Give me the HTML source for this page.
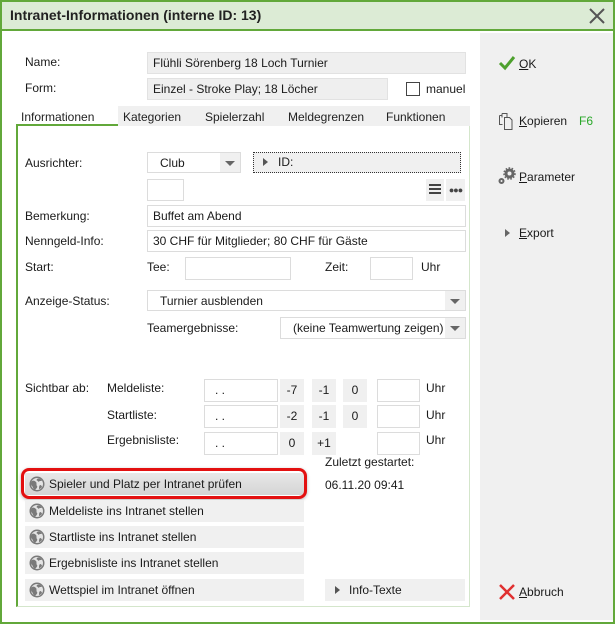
<!DOCTYPE html>
<html><head><meta charset="utf-8"><style>
*{box-sizing:border-box;margin:0;padding:0}
body{width:615px;height:624px;overflow:hidden;background:#fff;font-family:"Liberation Sans",sans-serif;font-size:12px;color:#1a1a1a;position:relative}
.a{position:absolute;white-space:nowrap}
.f{position:absolute;border:1px solid #dcdcdc;background:#fff;padding:0 5px;line-height:20px}
.g{position:absolute;background:#f0f0f0;text-align:center;line-height:22px}
.btn{position:absolute;left:25px;width:279px;height:22px;background:#f0f0f0;line-height:22px;padding-left:24px}
.glb{position:absolute;left:4px;top:3px}
.tab{position:absolute;top:106px;height:20px;line-height:22px;padding-left:5px;background:#f0f0f0;color:#222}
.dd{position:absolute;right:0;top:0;width:20px;height:100%;background:#f0f0f0}
.dd:after{content:"";position:absolute;left:5px;top:8px;border-left:5px solid transparent;border-right:5px solid transparent;border-top:5px solid #666}
u{text-decoration:underline}
</style></head><body>
<svg width="0" height="0" style="position:absolute"><defs><symbol id="gl" viewBox="0 0 16 16"><circle cx="8" cy="8" r="7.5" fill="#7a7a7a"/><circle cx="8" cy="8" r="6" fill="#e4e4e4"/><path d="M3 5c2-1 3 0 4 1s0 3 1 4-1 3-2 4c-2-1-2-3-3-4s-2-3 0-5zM9 2.5c2 0 3 1 4 2-1 1-2 0-3 1s-1-1-2-1 0-2 1-2zM11 9c1 0 2 1 2 2-1 1-2 2-3 2 0-2 0-3 1-4z" fill="#7a7a7a"/></symbol></defs></svg>
<div class="a" style="left:0;top:0;width:615px;height:624px;border:2px solid #62a83a"></div>
<div class="a" style="left:2px;top:2px;width:611px;height:29px;background:#dcebd5;border-bottom:2px solid #62a83a"></div>
<div class="a" style="left:10px;top:7px;font-size:14px;font-weight:bold;color:#222">Intranet-Informationen (interne ID: 13)</div>
<svg class="a" style="left:588px;top:7px" width="18" height="18"><path d="M2 2L16 16M16 2L2 16" stroke="#555" stroke-width="2"/></svg>
<div class="a" style="left:480px;top:33px;width:133px;height:587px;background:#f0f0f0"></div>

<div class="a" style="left:25px;top:55px">Name:</div>
<div class="f" style="left:147px;top:52px;width:319px;height:22px;background:#efefef;border-color:#e2e2e2">Flühli Sörenberg 18 Loch Turnier</div>
<div class="a" style="left:25px;top:81px">Form:</div>
<div class="f" style="left:147px;top:78px;width:241px;height:22px;background:#efefef;border-color:#e2e2e2">Einzel - Stroke Play; 18 Löcher</div>
<div class="a" style="left:406px;top:82px;width:14px;height:14px;border:1px solid #444;background:#fff"></div>
<div class="a" style="left:426px;top:82px">manuel</div>

<div class="tab" style="left:16px;width:102px;background:#fff;border-bottom:2px solid #62a83a">Informationen</div>
<div class="tab" style="left:118px;width:82px">Kategorien</div>
<div class="tab" style="left:200px;width:83px">Spielerzahl</div>
<div class="tab" style="left:283px;width:98px">Meldegrenzen</div>
<div class="tab" style="left:381px;width:89px">Funktionen</div>
<div class="a" style="left:16px;top:126px;width:454px;height:481px;border:1px solid #d4e6cb;border-top:none;border-left:2px solid #62a83a"></div>

<div class="a" style="left:25px;top:156px">Ausrichter:</div>
<div class="f" style="left:147px;top:152px;width:94px;height:21px;padding-left:12px">Club<div class="dd"></div></div>
<div class="a" style="left:253px;top:152px;width:208px;height:21px;background:#f0f0f0;border:1px dotted #333;line-height:19px;padding-left:24px">ID:</div>
<div class="a" style="left:263px;top:158px;border-top:4px solid transparent;border-bottom:4px solid transparent;border-left:5px solid #555"></div>
<div class="f" style="left:147px;top:179px;width:37px;height:22px"></div>
<div class="g" style="left:426px;top:179px;width:18px;height:22px"></div>
<div class="a" style="left:429px;top:184px;width:12px;height:2px;background:#444;box-shadow:0 4px #444,0 8px #444"></div>
<div class="g" style="left:446px;top:179px;width:19px;height:22px;font-size:9px;font-weight:bold;color:#444;letter-spacing:-1px">●●●</div>
<div class="a" style="left:25px;top:209px">Bemerkung:</div>
<div class="f" style="left:147px;top:205px;width:319px;height:22px">Buffet am Abend</div>
<div class="a" style="left:25px;top:234px">Nenngeld-Info:</div>
<div class="f" style="left:147px;top:230px;width:319px;height:22px">30 CHF für Mitglieder; 80 CHF für Gäste</div>
<div class="a" style="left:25px;top:260px">Start:</div>
<div class="a" style="left:147px;top:260px">Tee:</div>
<div class="f" style="left:185px;top:257px;width:106px;height:23px"></div>
<div class="a" style="left:325px;top:260px">Zeit:</div>
<div class="f" style="left:370px;top:257px;width:43px;height:23px"></div>
<div class="a" style="left:421px;top:260px">Uhr</div>
<div class="a" style="left:25px;top:294px">Anzeige-Status:</div>
<div class="f" style="left:147px;top:290px;width:319px;height:21px;padding-left:12px">Turnier ausblenden<div class="dd"></div></div>
<div class="a" style="left:147px;top:321px">Teamergebnisse:</div>
<div class="f" style="left:280px;top:317px;width:186px;height:22px;padding-left:12px">(keine Teamwertung zeigen)<div class="dd"></div></div>

<div class="a" style="left:25px;top:381px">Sichtbar ab:</div>
<div class="a" style="left:107px;top:381px">Meldeliste:</div>
<div class="a" style="left:107px;top:408px">Startliste:</div>
<div class="a" style="left:107px;top:433px">Ergebnisliste:</div>
<div class="f" style="left:204px;top:379px;width:74px;height:23px;padding-left:10px">. .</div>
<div class="f" style="left:204px;top:405px;width:74px;height:23px;padding-left:10px">. .</div>
<div class="f" style="left:204px;top:432px;width:74px;height:23px;padding-left:10px">. .</div>
<div class="g" style="left:280px;top:379px;width:24px;height:23px">-7</div>
<div class="g" style="left:312px;top:379px;width:24px;height:23px">-1</div>
<div class="g" style="left:343px;top:379px;width:24px;height:23px">0</div>
<div class="g" style="left:280px;top:405px;width:24px;height:23px">-2</div>
<div class="g" style="left:312px;top:405px;width:24px;height:23px">-1</div>
<div class="g" style="left:343px;top:405px;width:24px;height:23px">0</div>
<div class="g" style="left:280px;top:432px;width:24px;height:23px">0</div>
<div class="g" style="left:312px;top:432px;width:24px;height:23px">+1</div>
<div class="f" style="left:377px;top:379px;width:43px;height:23px"></div>
<div class="f" style="left:377px;top:405px;width:43px;height:23px"></div>
<div class="f" style="left:377px;top:432px;width:43px;height:23px"></div>
<div class="a" style="left:426px;top:381px">Uhr</div>
<div class="a" style="left:426px;top:408px">Uhr</div>
<div class="a" style="left:426px;top:433px">Uhr</div>
<div class="a" style="left:325px;top:455px">Zuletzt gestartet:</div>
<div class="a" style="left:325px;top:478px">06.11.20 09:41</div>

<div class="btn" style="top:473px;background:linear-gradient(#e8e8e8,#d4d4d4)"><svg class="glb" width="16" height="16"><use href="#gl"/></svg>Spieler und Platz per Intranet prüfen</div>
<div class="a" style="left:21px;top:468px;width:286px;height:31px;border:3px solid #e31010;border-radius:8px;box-shadow:0 1px 3px rgba(0,0,0,.3)"></div>
<div class="btn" style="top:500px"><svg class="glb" width="16" height="16"><use href="#gl"/></svg>Meldeliste ins Intranet stellen</div>
<div class="btn" style="top:526px"><svg class="glb" width="16" height="16"><use href="#gl"/></svg>Startliste ins Intranet stellen</div>
<div class="btn" style="top:552px"><svg class="glb" width="16" height="16"><use href="#gl"/></svg>Ergebnisliste ins Intranet stellen</div>
<div class="btn" style="top:579px"><svg class="glb" width="16" height="16"><use href="#gl"/></svg>Wettspiel im Intranet öffnen</div>
<div class="a" style="left:325px;top:579px;width:140px;height:22px;background:#f0f0f0;line-height:22px;padding-left:24px">Info-Texte</div>
<div class="a" style="left:335px;top:586px;border-top:4px solid transparent;border-bottom:4px solid transparent;border-left:5px solid #555"></div>

<svg class="a" style="left:498px;top:55px" width="18" height="16"><path d="M2 8L7 13L16 2" stroke="#4ea12e" stroke-width="3" fill="none"/></svg>
<div class="a" style="left:519px;top:57px"><u>O</u>K</div>
<svg class="a" style="left:498px;top:111px" width="18" height="20"><path d="M1.5 4.5h3M1.5 4.5v9h3" stroke="#555" fill="none"/><path d="M4 2.5h5v4M6.5 6.5h5l2.5 2.5v9.5h-7.5z" stroke="#555" fill="none"/><path d="M4 2.5v4" stroke="#555"/></svg>
<div class="a" style="left:519px;top:114px"><u>K</u>opieren</div>
<div class="a" style="left:579px;top:114px;color:#2aa82a">F6</div>
<svg class="a" style="left:498px;top:167px" width="18" height="18"><circle cx="11.5" cy="6.5" r="3.5" fill="none" stroke="#666" stroke-width="3"/><circle cx="11.5" cy="6.5" r="5.5" fill="none" stroke="#666" stroke-width="1.6" stroke-dasharray="1.6 1.5"/><circle cx="3.5" cy="14" r="2" fill="none" stroke="#666" stroke-width="2"/></svg>
<div class="a" style="left:519px;top:170px"><u>P</u>arameter</div>
<div class="a" style="left:505px;top:229px;border-top:4px solid transparent;border-bottom:4px solid transparent;border-left:5px solid #666"></div>
<div class="a" style="left:519px;top:226px"><u>E</u>xport</div>
<svg class="a" style="left:499px;top:584px" width="16" height="16"><path d="M1 1L15 15M15 1L1 15" stroke="#e03030" stroke-width="2.5"/></svg>
<div class="a" style="left:519px;top:585px"><u>A</u>bbruch</div>
</body></html>
